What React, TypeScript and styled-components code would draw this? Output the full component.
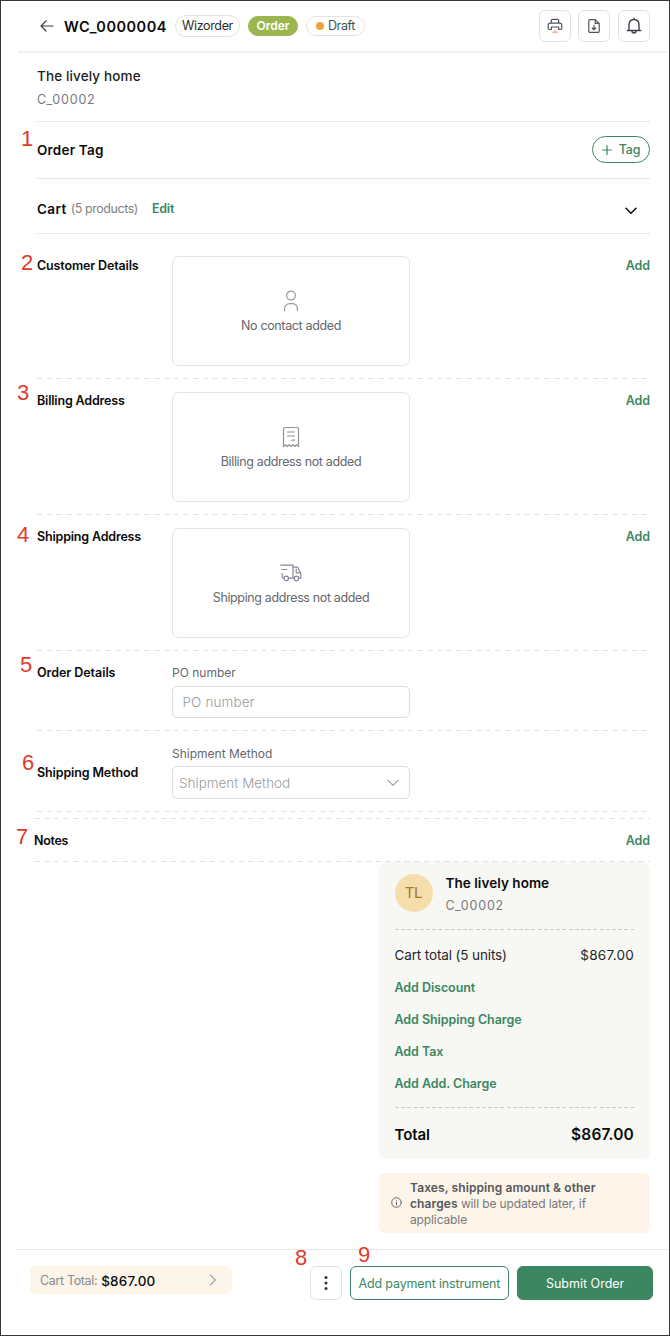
import React from 'react';
import styled, { createGlobalStyle, css } from 'styled-components';

const GlobalStyle = createGlobalStyle`
  * { box-sizing: border-box; }
  body { margin: 0; background: #fff; }
  button, input { font-family: inherit; }
`;

const green = '#3c8661';
const ink = '#0b0b0b';
const line = '#e6e8e8';

const Screen = styled.div`
  width: 670px;
  height: 1336px;
  border: 1px solid #37373a;
  background: #fff;
  display: flex;
  flex-direction: column;
  font-family: Inter, 'Liberation Sans', sans-serif;
  color: ${ink};
  overflow: hidden;
`;

type TypeProps = { $size?: number; $weight?: number; $color?: string; $track?: number };
const typeStyle = css<TypeProps>`
  font-size: ${(p) => p.$size ?? 12.5}px;
  font-weight: ${(p) => p.$weight ?? 400};
  color: ${(p) => p.$color ?? ink};
  letter-spacing: ${(p) => p.$track ?? 0}px;
  line-height: 16px;
  white-space: nowrap;
`;
const Label = styled.span<TypeProps>`${typeStyle}`;
const CartCount = styled(Label)`
  margin: 0 14px 0 4px;
`;
const TotalCaption = styled(Label)`
  margin-right: 4px;
`;

const LinkButton = styled.button<{ $track?: number }>`
  border: 0;
  padding: 0;
  background: none;
  text-align: left;
  color: ${green};
  font-size: 12.5px;
  font-weight: 600;
  line-height: 16px;
  letter-spacing: ${(p) => p.$track ?? -0.06}px;
  white-space: nowrap;
`;

const dashed = (color: string, dash: number, pitch: number) => css`
  background-image: repeating-linear-gradient(90deg, ${color} 0 ${dash}px, transparent ${dash}px ${pitch}px);
`;

const Header = styled.header`
  height: 52px;
  flex: none;
  margin: 0 2px 0 17px;
  padding: 0 17px 0 22px;
  border-bottom: 2px solid #f0f0f0;
  display: flex;
  align-items: center;
`;
const HeaderTitle = styled.h1`
  ${typeStyle}
  margin: 2px 0 0 10px;
  width: 111px;
`;
const Pill = styled.span<{ $w: number; $h: number; $gap?: number; $fill?: string }>`
  width: ${(p) => p.$w}px;
  height: ${(p) => p.$h}px;
  margin-left: ${(p) => p.$gap ?? 0}px;
  border-radius: 12px;
  border: 1px solid ${(p) => p.$fill ?? '#e2e4e4'};
  background: ${(p) => p.$fill ?? '#fff'};
  display: flex;
  align-items: center;
  justify-content: center;
  gap: 4px;
`;
const Dot = styled.i`
  width: 8px;
  height: 8px;
  border-radius: 50%;
  background: #eaa63c;
`;
const HeaderActions = styled.div`
  display: flex;
  gap: 7.6px;
  margin-left: auto;
`;
const IconButton = styled.button<{ $h?: number }>`
  width: 32px;
  height: ${(p) => p.$h ?? 32}px;
  padding: 0;
  border: 1px solid #dfe1e3;
  border-radius: 6px;
  background: #fff;
  display: flex;
  align-items: center;
  justify-content: center;
`;

const Content = styled.main`
  margin: 0 19px 0 36px;
  flex: none;
`;
const CustomerBlock = styled.section`
  height: 69px;
  border-bottom: 1px solid ${line};
  padding-top: 15px;
  display: flex;
  flex-direction: column;
  gap: 8px;
`;
const Bar = styled.section<{ $h: number; $drop?: number }>`
  position: relative;
  height: ${(p) => p.$h}px;
  padding-top: ${(p) => p.$drop ?? 0}px;
  border-bottom: 1px solid ${line};
  display: flex;
  align-items: center;
`;
const TagButton = styled.button`
  width: 58px;
  height: 27px;
  margin: 0 0 1px auto;
  padding: 0;
  border: 1px solid ${green};
  border-radius: 14px;
  background: #fff;
  display: flex;
  align-items: center;
  justify-content: center;
  gap: 7px;
`;
const ChevronSlot = styled.span`
  margin: 3px 13px 0 auto;
  display: flex;
`;

const FormRow = styled.section<{ $h: number; $top: number }>`
  position: relative;
  height: ${(p) => p.$h}px;
  padding: ${(p) => p.$top}px 0 0;
  display: grid;
  grid-template-columns: 135px 238px 1fr;
  align-items: start;
  ${dashed('#e2e3e3', 6, 9.75)}
  background-size: 100% 1px;
  background-repeat: no-repeat;
  background-position: left bottom;
`;
const RowTitle = styled.h2<{ $drop?: number; $track?: number }>`
  ${typeStyle}
  font-weight: 600;
  margin: ${(p) => p.$drop ?? 0}px 0 0;
`;
const RowAction = styled.div<{ $drop?: number }>`
  display: flex;
  justify-self: end;
  margin-top: ${(p) => p.$drop ?? 0}px;
`;
const EmptyCard = styled.div`
  height: 110px;
  border: 1px solid #e4e5e6;
  border-radius: 6px;
  padding-top: 32px;
  display: flex;
  flex-direction: column;
  align-items: center;
`;
const CardIcon = styled.span`
  height: 29px;
  display: flex;
  align-items: center;
  padding-bottom: 5px;
`;
const Field = styled.label`
  display: flex;
  flex-direction: column;
`;
const InputBox = styled.div<{ $h: number; $pad: number; $gap: number }>`
  height: ${(p) => p.$h}px;
  margin-top: ${(p) => p.$gap}px;
  padding: 0 10px 0 ${(p) => p.$pad}px;
  border: 1px solid #dcdddd;
  border-radius: 5px;
  display: flex;
  align-items: center;
  justify-content: space-between;
`;

const NotesRow = styled.section`
  position: relative;
  height: 44px;
  margin: 6px 0 0 -3px;
  padding-top: 1px;
  display: flex;
  align-items: center;
  justify-content: space-between;
  background-image:
    repeating-linear-gradient(90deg, #e2e3e3 0 6px, transparent 6px 9.75px),
    repeating-linear-gradient(90deg, #e2e3e3 0 6px, transparent 6px 9.75px);
  background-size: 100% 1px;
  background-repeat: no-repeat;
  background-position: left top, left bottom;
`;

const Aside = styled.aside`
  width: 271px;
  margin-left: auto;
`;
const SummaryCard = styled.section`
  height: 297px;
  padding: 12px 16px 0 15.5px;
  border-radius: 8px;
  background: #f7f8f4;
`;
const SummaryHead = styled.div`
  display: flex;
  gap: 13px;
  height: 55px;
`;
const Avatar = styled.span`
  width: 38px;
  height: 38px;
  border-radius: 50%;
  background: #f5deac;
  display: flex;
  align-items: center;
  justify-content: center;
`;
const NameStack = styled.div`
  display: flex;
  flex-direction: column;
  gap: 7px;
  margin-top: 1px;
`;
const SummaryDivider = styled.div`
  height: 1px;
  ${dashed('#c8cac6', 4, 6.2)}
`;
const SummaryLine = styled.div<{ $top: number }>`
  display: flex;
  justify-content: space-between;
  padding-top: ${(p) => p.$top}px;
`;
const Charges = styled.div`
  display: flex;
  flex-direction: column;
  gap: 16px;
  padding: 17px 0 15px;
`;
const Notice = styled.section`
  height: 60px;
  margin-top: 14px;
  padding: 7px 12px 0;
  border-radius: 6px;
  background: #fdf5e9;
  display: flex;
  gap: 8px;
  svg { margin-top: 17px; flex: none; }
`;
const NoticeText = styled.p`
  margin: 0;
  font-size: 12px;
  line-height: 16px;
  letter-spacing: -0.12px;
  color: #77787b;
  white-space: nowrap;
  b { font-weight: 600; color: #55575b; letter-spacing: 0.1px; }
`;

const Footer = styled.footer`
  position: relative;
  margin: 16px 0 0 14px;
  border-top: 1px solid ${line};
  padding: 16px 16px 0 15px;
  display: flex;
  align-items: flex-start;
`;
const CartTotal = styled.div`
  width: 202px;
  height: 28px;
  margin-right: 78px;
  padding: 1px 15px 0 10px;
  border-radius: 5px;
  background: #fcf6ea;
  display: flex;
  align-items: center;
  svg { margin: 0 0 1px auto; }
`;
const ActionButton = styled.button<{ $w: number; $solid?: boolean }>`
  width: ${(p) => p.$w}px;
  height: 34px;
  margin-left: 8px;
  padding: 0;
  border: 1px solid ${green};
  border-radius: 6px;
  background: ${(p) => (p.$solid ? green : '#fff')};
`;

/* Red callout number lying over the form */
const Callout = styled.span<{ $x: number; $y: number }>`
  position: absolute;
  left: ${(p) => p.$x}px;
  top: ${(p) => p.$y}px;
  font: 22px/22px 'Liberation Sans', sans-serif;
  color: #e03a2b;
`;

const Svg = ({ w, h, color, sw = 1.2, children }: { w: number; h: number; color: string; sw?: number; children: React.ReactNode }) => (
  <svg width={w} height={h} viewBox={`0 0 ${w} ${h}`} fill="none" stroke={color} strokeWidth={sw} strokeLinecap="round" strokeLinejoin="round">
    {children}
  </svg>
);

const UserIcon = () => (
  <Svg w={16} h={22} color="#989ba0">
    <circle cx="8" cy="5.6" r="4.4" />
    <path d="M1.6 20.7v-2.2a4.8 4.8 0 0 1 4.8-4.8h3.2a4.8 4.8 0 0 1 4.8 4.8v2.2" />
  </Svg>
);
const ReceiptIcon = () => (
  <Svg w={18} h={22} color="#8f9297">
    <path d="M1.500 20.500V3.200a1.700 1.700 0 0 1 1.700-1.700h11.600a1.700 1.700 0 0 1 1.700 1.700v17.300l-1.900-1.900-1.900 1.900-1.800-1.900-1.900 1.900-1.900-1.900-1.900 1.900-1.900-1.900z" />
    <path d="M5.500 6h7M5.500 10h7M10 14.200h2.500" />
  </Svg>
);
const TruckIcon = () => (
  <Svg w={22} h={18} color="#85889a">
    <path d="M.8 1.200h12.200v13M13 3.200h3.800a1.500 1.500 0 0 1 1.400 1l2.600 5v5h-1.900M14 14.200H8.800M1.800 5.500h5M2.200 9.600v3.200a1.400 1.400 0 0 0 1.400 1.400M16.200 5.200v3.600h4.200" />
    <circle cx="6.200" cy="14.400" r="2.200" />
    <circle cx="16.500" cy="14.400" r="2.200" />
  </Svg>
);

const EmptyState = ({ icon, text }: { icon: React.ReactNode; text: string }) => (
  <EmptyCard>
    <CardIcon>{icon}</CardIcon>
    <Label $color="#65676b" $track={-0.36}>{text}</Label>
  </EmptyCard>
);

export default function App() {
  return (
    <Screen>
      <GlobalStyle />
      <Header>
        <Svg w={14} h={12} color="#3c3f45">
          <path d="M13 6H1M6 1L1 6l5 5" />
        </Svg>
        <HeaderTitle $size={14.5} $weight={600} $track={0.5}>WC_0000004</HeaderTitle>
        <Pill $w={65} $h={22}><Label $color="#2c2d2e" $track={-0.35}>Wizorder</Label></Pill>
        <Pill $w={50} $h={20} $gap={8} $fill="#9bb64f"><Label $weight={600} $color="#fff" $size={12}>Order</Label></Pill>
        <Pill $w={59} $h={20} $gap={8}><Dot /><Label $color="#3b5650" $track={-0.4}>Draft</Label></Pill>
        <HeaderActions>
          <IconButton>
            <Svg w={16} h={16} color="#50535c">
              <path d="M4.300 5.200V2.600A1.200 1.200 0 0 1 5.500 1.400h5a1.200 1.200 0 0 1 1.200 1.200v2.600M3.600 11.500H2.400a1.200 1.200 0 0 1-1.200-1.200V7.200a2 2 0 0 1 2-2h9.600a2 2 0 0 1 2 2v3.100a1.200 1.200 0 0 1-1.200 1.200h-1.200M4.300 11.500V9h7.400v2.500" />
              <path d="M5.800 14.300h4.400M6.600 13h2.800" stroke="#efb094" />
            </Svg>
          </IconButton>
          <IconButton>
            <Svg w={14} h={16} color="#50535c">
              <path d="M8.200 1.600H3A1.200 1.200 0 0 0 1.800 2.800v10.400A1.200 1.200 0 0 0 3 14.400h8a1.200 1.200 0 0 0 1.200-1.200V5.400zM8.200 1.600v3.800h4M7 7.200v4.400M5.200 10 7 11.700 8.800 10" />
            </Svg>
          </IconButton>
          <IconButton>
            <Svg w={16} h={18} color="#3c4048" sw={1.4}>
              <path d="M1.300 13.500h13.400M3 13.500V7.800C3 4.600 5 2.500 8 2.500s5 2.100 5 5.300v5.700M8 2.500V1.300M6 14a2 2 0 0 0 4 0" />
            </Svg>
          </IconButton>
        </HeaderActions>
      </Header>

      <Content>
        <CustomerBlock>
          <Label $size={13.5} $weight={500} $color="#1d1e20" $track={0.13}>The lively home</Label>
          <Label $color="#77797d" $track={0.8}>C_00002</Label>
        </CustomerBlock>

        <Bar $h={57}>
          <Callout $x={-16} $y={6}>1</Callout>
          <Label $size={13.5} $weight={600} $track={0.2}>Order Tag</Label>
          <TagButton>
            <Svg w={10} h={10} color={green}><path d="M5 .6v8.800M.6 5h8.800" /></Svg>
            <Label $color={green} $weight={500} $track={-0.2}>Tag</Label>
          </TagButton>
        </Bar>

        <Bar $h={55} $drop={6}>
          <Label $size={13.5} $weight={600} $track={0.4}>Cart</Label>
          <CartCount $color="#808286" $track={-0.45}>(5 products)</CartCount>
          <LinkButton $track={-0.2}>Edit</LinkButton>
          <ChevronSlot>
            <Svg w={12} h={8} color="#111" sw={1.6}><path d="M1 1.300l5 5 5-5" /></Svg>
          </ChevronSlot>
        </Bar>

        <FormRow $h={145} $top={22}>
          <Callout $x={-16} $y={18}>2</Callout>
          <RowTitle $drop={2} $track={-0.15}>Customer Details</RowTitle>
          <EmptyState icon={<UserIcon />} text="No contact added" />
          <RowAction $drop={2}><LinkButton>Add</LinkButton></RowAction>
        </FormRow>
        <FormRow $h={136} $top={13}>
          <Callout $x={-20} $y={3}>3</Callout>
          <RowTitle $drop={1} $track={-0.17}>Billing Address</RowTitle>
          <EmptyState icon={<ReceiptIcon />} text="Billing address not added" />
          <RowAction $drop={1}><LinkButton>Add</LinkButton></RowAction>
        </FormRow>
        <FormRow $h={136} $top={13}>
          <Callout $x={-20} $y={9}>4</Callout>
          <RowTitle $drop={1} $track={-0.18}>Shipping Address</RowTitle>
          <EmptyState icon={<TruckIcon />} text="Shipping address not added" />
          <RowAction $drop={1}><LinkButton>Add</LinkButton></RowAction>
        </FormRow>
        <FormRow $h={80} $top={14}>
          <Callout $x={-17} $y={3}>5</Callout>
          <RowTitle $track={-0.05}>Order Details</RowTitle>
          <Field>
            <Label $color="#65676b" $size={12}>PO number</Label>
            <InputBox $h={32} $pad={9.5} $gap={5}><Label $size={13.5} $weight={300} $color="#999b9e" $track={0.12}>PO number</Label></InputBox>
          </Field>
        </FormRow>
        <FormRow $h={81} $top={15}>
          <Callout $x={-15} $y={21}>6</Callout>
          <RowTitle $drop={19} $track={-0.12}>Shipping Method</RowTitle>
          <Field>
            <Label $color="#65676b" $size={12}>Shipment Method</Label>
            <InputBox $h={33} $pad={6} $gap={4}>
              <Label $size={13.5} $weight={300} $color="#999b9e">Shipment Method</Label>
              <Svg w={12} h={8} color="#a2a4a6"><path d="M1 1.300l5 5 5-5" /></Svg>
            </InputBox>
          </Field>
        </FormRow>
        <NotesRow>
          <Callout $x={-18} $y={8}>7</Callout>
          <RowTitle $track={-0.3}>Notes</RowTitle>
          <LinkButton>Add</LinkButton>
        </NotesRow>

        <Aside>
          <SummaryCard>
            <SummaryHead>
              <Avatar><Label $size={15} $color="#a97a22" $track={-0.4}>TL</Label></Avatar>
              <NameStack>
                <Label $size={13.5} $weight={600} $track={0.05}>The lively home</Label>
                <Label $color="#77797d" $track={0.8}>C_00002</Label>
              </NameStack>
            </SummaryHead>
            <SummaryDivider />
            <SummaryLine $top={17}>
              <Label $size={13.5} $color="#26272a" $track={-0.13}>Cart total (5 units)</Label>
              <Label $size={13.5} $color="#26272a" $track={0.25}>$867.00</Label>
            </SummaryLine>
            <Charges>
              <LinkButton>Add Discount</LinkButton>
              <LinkButton>Add Shipping Charge</LinkButton>
              <LinkButton>Add Tax</LinkButton>
              <LinkButton>Add Add. Charge</LinkButton>
            </Charges>
            <SummaryDivider />
            <SummaryLine $top={19}>
              <Label $size={15} $weight={600} $track={-0.1}>Total</Label>
              <Label $size={15.5} $weight={600} $track={0.15}>$867.00</Label>
            </SummaryLine>
          </SummaryCard>
          <Notice>
            <Svg w={11} h={11} color="#66686b" sw={1}>
              <circle cx="5.500" cy="5.500" r="4.800" />
              <path d="M5.500 5.200v2.800M5.500 3.200v.1" />
            </Svg>
            <NoticeText>
              <b>Taxes, shipping amount &amp; other<br />charges</b> will be updated later, if<br />applicable
            </NoticeText>
          </Notice>
        </Aside>
      </Content>

      <Footer>
        <Callout $x={280} $y={-3}>8</Callout>
        <Callout $x={343} $y={-6}>9</Callout>
        <CartTotal>
          <TotalCaption $color="#88898a" $track={-0.35}>Cart Total:</TotalCaption>
          <Label $size={13.5} $weight={500} $track={0.2}>$867.00</Label>
          <Svg w={8} h={12} color="#a6a5a0"><path d="M1.300 1l5 5-5 5" /></Svg>
        </CartTotal>
        <IconButton $h={34}>
          <svg width="4" height="16" viewBox="0 0 4 16" fill="#2e3034">
            <circle cx="2" cy="2.500" r="1.500" /><circle cx="2" cy="8" r="1.500" /><circle cx="2" cy="13.500" r="1.500" />
          </svg>
        </IconButton>
        <ActionButton $w={160}><Label $color={green} $size={12.5} $track={-0.16}>Add payment instrument</Label></ActionButton>
        <ActionButton $w={136} $solid><Label $color="#fff" $size={12.5}>Submit Order</Label></ActionButton>
      </Footer>
    </Screen>
  );
}
